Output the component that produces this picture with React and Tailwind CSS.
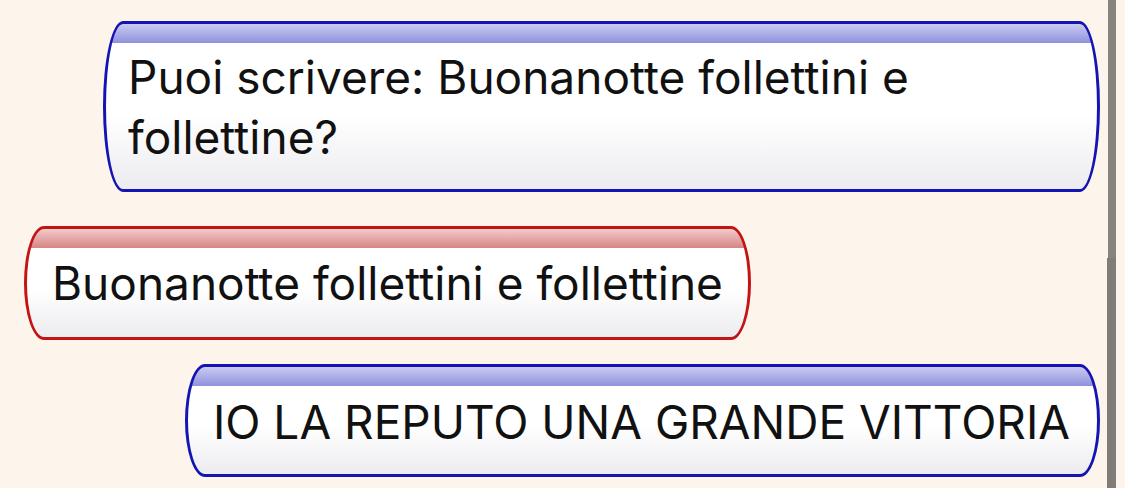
export default function App() {
  const font = { fontFamily: 'Inter, "Noto Sans", sans-serif' };
  const blue =
    "border-[3px] border-[#1414b4] rounded-[20px/50%] bg-[linear-gradient(to_bottom,#cacbf1_0px,#8e92dc_19px,#ffffff_19px,#ffffff_55%,#ececf0_100%)]";
  const red =
    "border-[3px] border-[#c21414] rounded-[20px/50%] bg-[linear-gradient(to_bottom,#f2cbcb_0px,#d68585_19px,#ffffff_19px,#ffffff_55%,#ececf0_100%)]";

  return (
    <div className="w-[1125px] h-[488px] overflow-hidden bg-[#fdf5ec] flex" style={font}>
      {/* conversation */}
      <div className="flex-1 flex flex-col pt-[21px] pr-[7px] pl-[24px] text-[46px] leading-[60px] text-[#111]">
        <div className="flex justify-end">
          <div className={`${blue} w-[997px] pl-[22px] pr-[24px] pt-[23px] pb-[22px]`}>
            Puoi scrivere: Buonanotte follettini e follettine?
          </div>
        </div>
        <div className="flex justify-start mt-[34px]">
          <div className={`${red} pl-[25px] pr-[25px] pt-[24px] pb-[24px]`}>
            Buonanotte follettini e follettine
          </div>
        </div>
        <div className="flex justify-end mt-[24px]">
          <div className={`${blue} pl-[25px] pr-[27px] pt-[25px] pb-[22px]`}>
            IO LA REPUTO UNA GRANDE VITTORIA
          </div>
        </div>
      </div>
      {/* scroll indicator */}
      <div className="w-[9px] mr-[9px] flex flex-col">
        <div className="h-[258px] w-[8px] ml-[1px] bg-[#86827c]" />
        <div className="flex-1 w-[9px] bg-[#807c77]" />
      </div>
    </div>
  );
}
